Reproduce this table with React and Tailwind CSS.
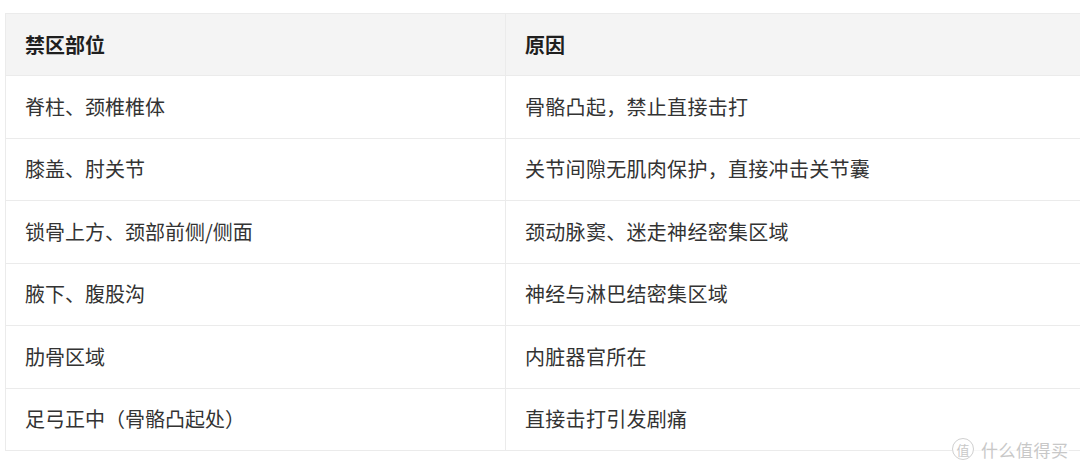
const rows = [
  ["脊柱、颈椎椎体", "骨骼凸起，禁止直接击打"],
  ["膝盖、肘关节", "关节间隙无肌肉保护，直接冲击关节囊"],
  ["锁骨上方、颈部前侧/侧面", "颈动脉窦、迷走神经密集区域"],
  ["腋下、腹股沟", "神经与淋巴结密集区域"],
  ["肋骨区域", "内脏器官所在"],
  ["足弓正中（骨骼凸起处）", "直接击打引发剧痛"],
]

export default function App() {
  return (
    <div
      className="relative w-[1080px] h-[469px] overflow-hidden bg-white pl-[5px] pt-[13px]"
      style={{ fontFamily: '"Noto Sans CJK SC", "Noto Sans", sans-serif' }}
    >
      <table className="w-[1100px] border-collapse table-fixed text-[20px] leading-none">
        <colgroup>
          <col className="w-[500px]" />
          <col />
        </colgroup>
        <thead>
          <tr className="h-[62px] bg-[#f4f4f4]">
            <th className="border border-[#ebebeb] pl-[19px] text-left font-bold text-[#1f1f1f]">禁区部位</th>
            <th className="border border-[#ebebeb] pl-[19px] text-left font-bold text-[#1f1f1f]">原因</th>
          </tr>
        </thead>
        <tbody>
          {rows.map(([part, reason], i) => (
            <tr key={i} className="h-[62.5px]">
              <td className="border border-[#ebebeb] pl-[19px] text-[#333]">{part}</td>
              <td className="border border-[#ebebeb] pl-[19px] text-[#333] tracking-[0.3px]">{reason}</td>
            </tr>
          ))}
        </tbody>
      </table>

      <div className="absolute left-[952px] top-[438px] flex items-center gap-[7px] bg-white/60 text-[#c8c8c8]">
        <div className="w-[22px] h-[22px] rounded-full border border-[#d0d0d0] bg-white flex items-center justify-center text-[13px] leading-none">
          值
        </div>
        <span className="text-[17px] leading-none tracking-[0.5px]">什么值得买</span>
      </div>
    </div>
  )
}
